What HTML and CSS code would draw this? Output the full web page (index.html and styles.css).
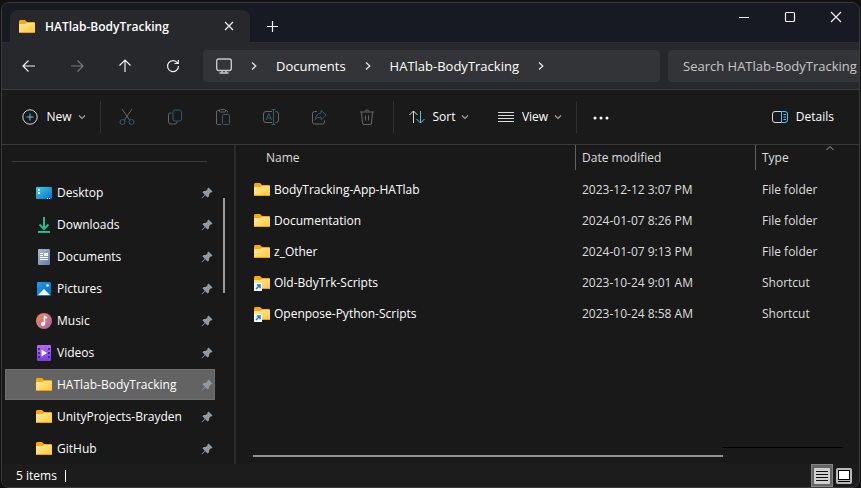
FILE: index.html
```html
<!DOCTYPE html>
<html lang="en">
<head>
<meta charset="utf-8">
<meta name="viewport" content="width=device-width, initial-scale=1">
<title>HATlab-BodyTracking</title>
<link rel="stylesheet" href="styles.css">
</head>
<body>
<svg class="defs" aria-hidden="true">
  <defs>
    <linearGradient id="gFolder" x1="0" y1="0" x2="1" y2="1"><stop offset="0" stop-color="#ffe9a0"/><stop offset="1" stop-color="#ffc937"/></linearGradient>
    <linearGradient id="gDesk" x1="0" y1="0" x2="1" y2="1"><stop offset="0" stop-color="#36d3e8"/><stop offset="1" stop-color="#0f6cc4"/></linearGradient>
    <linearGradient id="gDown" x1="0" y1="0" x2="0" y2="1"><stop offset="0" stop-color="#2fcf8a"/><stop offset="1" stop-color="#1ba58c"/></linearGradient>
    <linearGradient id="gDoc" x1="0" y1="0" x2="1" y2="1"><stop offset="0" stop-color="#a9bcd0"/><stop offset="1" stop-color="#607d9f"/></linearGradient>
    <linearGradient id="gPic" x1="0" y1="0" x2="1" y2="1"><stop offset="0" stop-color="#1f9cea"/><stop offset="1" stop-color="#0a68bd"/></linearGradient>
    <linearGradient id="gMusic" x1="0" y1="0" x2="1" y2="1"><stop offset="0" stop-color="#f58a50"/><stop offset="1" stop-color="#a65fb0"/></linearGradient>
    <linearGradient id="gVid" x1="0" y1="0" x2="0" y2="1"><stop offset="0" stop-color="#b36bf0"/><stop offset="1" stop-color="#7a3fe0"/></linearGradient>
    <symbol id="folder" viewBox="0 0 16 16">
      <path d="M0 2.500Q0 1 1.300 1H6L8 3H15Q16 3 16 4V8H0z" fill="#f5ab0c"/>
      <path d="M0 5.500Q0 5 .8 5H6L8 4H15Q16 4 16 5V13Q16 14 15 14H1Q0 14 0 13z" fill="url(#gFolder)"/>
      <path d="M.3 13.500H15.700" stroke="#e8a50e"/>
    </symbol>
    <symbol id="shortcut" viewBox="0 0 16 16">
      <use href="#folder"/>
      <rect y="8" width="8" height="8" fill="#f4f7fa"/>
      <path d="M2 14L5.500 10.500M2.800 10H6V13.200" fill="none" stroke="#1680d0" stroke-width="1.500"/>
    </symbol>
    <symbol id="pin" viewBox="0 0 12 12">
      <path d="M7.500 .5L11.500 4.500L10.500 5.500L9.500 5.500L8 7.500V9.500L6.500 10.500L4.300 8.200L1 11.500L.5 11L3.800 7.700L1.500 5.500L2.500 4H4.500L6.500 2.500V1.500z" fill="#8f9ba4"/>
    </symbol>
    <symbol id="chev" viewBox="0 0 8 8"><path d="M1 2.500L4 5.500L7 2.500" fill="none" stroke="#a0a0a0" stroke-width="1.200"/></symbol>
    <symbol id="crumb" viewBox="0 0 8 8"><path d="M2 .5L5.800 4L2 7.500" fill="none" stroke="#e4e4e4" stroke-width="1.300"/></symbol>
  </defs>
</svg>
<div class="window">
  <header class="titlebar">
    <div class="tab">
      <svg class="icon"><use href="#folder"/></svg>
      <span class="tab-title">HATlab-BodyTracking</span>
      <button class="tab-close" aria-label="Close tab"><svg class="glyph" viewBox="0 0 16 16"><path d="M4 3L12 11M12 3L4 11"/></svg></button>
    </div>
    <button class="new-tab" aria-label="New tab"><svg class="glyph" viewBox="0 0 16 16"><path d="M8.500 3V14M3 8.500H14"/></svg></button>
    <div class="captions">
      <button aria-label="Minimize"><svg class="glyph" viewBox="0 0 16 16"><path d="M3 8.500H13"/></svg></button>
      <button aria-label="Maximize"><svg class="glyph" viewBox="0 0 16 16"><rect x="3.500" y="3.500" width="9" height="9" rx="1"/></svg></button>
      <button aria-label="Close"><svg class="glyph" viewBox="0 0 16 16"><path d="M3 3L13 13M13 3L3 13"/></svg></button>
    </div>
  </header>

  <div class="navbar">
    <div class="nav-buttons">
      <button aria-label="Back"><svg class="glyph" viewBox="0 0 16 16"><path d="M14 8H2.500M7.500 2.500L2 8L7.500 13.500"/></svg></button>
      <button class="dim" aria-label="Forward"><svg class="glyph" viewBox="0 0 16 16"><path d="M2 8H13.500M8.500 2.500L14 8L8.500 13.500"/></svg></button>
      <button aria-label="Up"><svg class="glyph" viewBox="0 0 16 16"><path d="M8 14V2.500M2.500 7.500L8 2L13.500 7.500"/></svg></button>
      <button aria-label="Refresh"><svg class="glyph" viewBox="0 0 16 16"><path d="M13.500 8A5.500 5.500 0 1 1 12.500 5M13.300 2V5.500H9.500"/></svg></button>
    </div>
    <nav class="address" aria-label="Address">
      <svg class="monitor" viewBox="0 0 16 16"><rect x=".7" y="1" width="14.600" height="11.500" rx="2"/><path d="M6 13V15M10 13V15M3.500 15H12.500"/></svg>
      <svg class="crumb"><use href="#crumb"/></svg>
      <a href="#documents">Documents</a>
      <svg class="crumb"><use href="#crumb"/></svg>
      <a href="#body">HATlab-BodyTracking</a>
      <svg class="crumb"><use href="#crumb"/></svg>
    </nav>
    <input class="search" type="text" aria-label="Search" placeholder="Search HATlab-BodyTracking">
  </div>

  <div class="toolbar">
    <button class="command new"><svg class="icon line" viewBox="0 0 16 16"><circle cx="8" cy="8" r="7.200"/><path class="blue" d="M8 4.500V11.500M4.500 8H11.500"/></svg>New<svg class="chev"><use href="#chev"/></svg></button>
    <div class="tools">
      <button aria-label="Cut"><svg class="icon line" viewBox="0 0 16 16"><path d="M3 0L10.500 11M13 0L5.500 11"/><g class="blue"><circle cx="3.500" cy="13" r="2.500"/><circle cx="12.500" cy="13" r="2.500"/></g></svg></button>
      <button aria-label="Copy"><svg class="icon line" viewBox="0 0 16 16"><path d="M4.500 4H3Q1.500 4 1.500 6V13Q1.500 15 3.500 15H8Q10 15 10 12.500"/><rect class="blue" x="6" y="1" width="8.500" height="11" rx="2"/></svg></button>
      <button aria-label="Paste"><svg class="icon line" viewBox="0 0 16 16"><path d="M6 15.500H2.500Q1.500 15.500 1.500 14V3Q1.500 1.500 3 1.500H5M10 1.500H11.500Q12.500 1.500 12.500 3.500"/><rect x="4.500" y=".5" width="6" height="2.500" rx="1"/><rect class="blue" x="7.500" y="5.500" width="7" height="10" rx="1"/></svg></button>
      <button aria-label="Rename"><svg class="icon line" viewBox="0 0 16 16"><path d="M9 2.500H3Q.5 2.500 .5 5V11Q.5 13.500 3 13.500H9M12.500 2.500H13Q15.500 2.500 15.500 5V11Q15.500 13.500 13 13.500H12.500"/><path class="blue" d="M3 11L5.800 4.500L8.600 11M4 9H7.600M10.500 .5V15.500M8.500 .5H12.500M8.500 15.500H12.500"/></svg></button>
      <button aria-label="Share"><svg class="icon line" viewBox="0 0 16 16"><path d="M6 2.500H3.500Q1.500 2.500 1.500 4.500V13Q1.500 15 3.500 15H11.500Q13.500 15 13.500 13V11.500"/><path class="blue" d="M10 1.500L15.200 6L10 10.500V8Q6 8 4.200 10.500Q5 4.500 10 4.200z"/></svg></button>
      <button aria-label="Delete"><svg class="icon line" viewBox="0 0 16 16"><path d="M1 3H15M6 2.500Q6 1 8 1Q10 1 10 2.500M2.500 3L3.500 14Q3.600 15.500 5 15.500H11Q12.400 15.500 12.500 14L13.500 3M6.500 6.500V11.500M9.500 6.500V11.500"/></svg></button>
    </div>
    <button class="command sort"><svg class="icon line" viewBox="0 0 16 16"><path d="M4.500 14V2M.5 6L4.500 2L8.500 6"/><path class="blue" d="M11.500 2V14M7.500 10L11.500 14L15.500 10"/></svg>Sort<svg class="chev"><use href="#chev"/></svg></button>
    <button class="command view"><svg class="icon line" viewBox="0 0 16 16"><path d="M0 3.500H16M0 6.500H16M0 9.500H16M0 12.500H16"/></svg>View<svg class="chev"><use href="#chev"/></svg></button>
    <button class="more" aria-label="See more"><svg class="icon" viewBox="0 0 16 16" fill="#fff"><circle cx="2" cy="9" r="1.500"/><circle cx="8" cy="9" r="1.500"/><circle cx="14" cy="9" r="1.500"/></svg></button>
    <button class="command details"><svg class="icon line" viewBox="0 0 16 16"><path d="M9.500 2.500H3Q.5 2.500 .5 5V11Q.5 13.500 3 13.500H9.500"/><path class="blue" d="M9.500 2.500H13Q15.500 2.500 15.500 5V11Q15.500 13.500 13 13.500H9.500zM11.500 5.500H14M11.500 8H14M11.500 10.500H14"/></svg>Details</button>
  </div>

  <div class="content">
    <aside class="sidebar">
      <ul class="places">
        <li><a href="#desktop"><svg class="icon" viewBox="0 0 16 16"><rect y="2" width="16" height="12" rx="1" fill="url(#gDesk)"/><path d="M2 4H4V6H2zM2 7H4V9H2z" fill="#fff"/><path d="M11 13.500H12M13 13.500H14" stroke="#d8f0ff"/></svg><span>Desktop</span><svg class="pin"><use href="#pin"/></svg></a></li>
        <li><a href="#downloads"><svg class="icon" viewBox="0 0 16 16"><path d="M8 0V12M3.500 7.500L8 12L12.500 7.500" fill="none" stroke="#22bd88" stroke-width="2"/><rect x="2" y="14" width="12" height="2" fill="url(#gDown)"/></svg><span>Downloads</span><svg class="pin"><use href="#pin"/></svg></a></li>
        <li><a href="#docs"><svg class="icon" viewBox="0 0 16 16"><rect x="2" width="12" height="16" rx="1" fill="url(#gDoc)"/><path d="M4 4.500H7M4 6.500H7M4 8.500H12M4 10.500H12" stroke="#fff"/><rect x="8" y="4" width="4" height="3" fill="#fff"/></svg><span>Documents</span><svg class="pin"><use href="#pin"/></svg></a></li>
        <li><a href="#pictures"><svg class="icon" viewBox="0 0 16 16"><rect x="1" y="1" width="14" height="14" rx="1" fill="url(#gPic)"/><path d="M2 14L8 8L14 14z" fill="#fff"/><circle cx="11.500" cy="4.500" r="1.300" fill="#fff"/></svg><span>Pictures</span><svg class="pin"><use href="#pin"/></svg></a></li>
        <li><a href="#music"><svg class="icon" viewBox="0 0 16 16"><circle cx="8" cy="8" r="8" fill="url(#gMusic)"/><ellipse cx="7" cy="11" rx="2.200" ry="2" fill="#fff"/><path d="M8.500 11V3.500L11 5" fill="none" stroke="#fff" stroke-width="1.500"/></svg><span>Music</span><svg class="pin"><use href="#pin"/></svg></a></li>
        <li><a href="#videos"><svg class="icon" viewBox="0 0 16 16"><rect x="1" width="14" height="16" rx="1" fill="url(#gVid)"/><path d="M5.500 4.500V11.500L11 8z" fill="#fff"/><path d="M3 3V15M13 3V15" stroke="#4a2596" stroke-width="2" stroke-dasharray="2 2"/></svg><span>Videos</span><svg class="pin"><use href="#pin"/></svg></a></li>
        <li><a class="selected" href="#body"><svg class="icon"><use href="#folder"/></svg><span>HATlab-BodyTracking</span><svg class="pin"><use href="#pin"/></svg></a></li>
        <li><a href="#unity"><svg class="icon"><use href="#folder"/></svg><span>UnityProjects-Brayden</span><svg class="pin"><use href="#pin"/></svg></a></li>
        <li><a href="#github"><svg class="icon"><use href="#folder"/></svg><span>GitHub</span><svg class="pin"><use href="#pin"/></svg></a></li>
      </ul>
      <div class="scroll-track"><div class="scroll-thumb"></div></div>
    </aside>
    <main class="files">
      <table>
        <colgroup><col class="col-name"><col class="col-date"><col></colgroup>
        <thead><tr><th><div>Name</div></th><th><div>Date modified</div></th><th><div>Type</div></th></tr></thead>
        <tbody>
          <tr><td><div class="file"><svg class="icon"><use href="#folder"/></svg>BodyTracking-App-HATlab</div></td><td>2023-12-12 3:07 PM</td><td>File folder</td></tr>
          <tr><td><div class="file"><svg class="icon"><use href="#folder"/></svg>Documentation</div></td><td>2024-01-07 8:26 PM</td><td>File folder</td></tr>
          <tr><td><div class="file"><svg class="icon"><use href="#folder"/></svg>z_Other</div></td><td>2024-01-07 9:13 PM</td><td>File folder</td></tr>
          <tr><td><div class="file"><svg class="icon"><use href="#shortcut"/></svg>Old-BdyTrk-Scripts</div></td><td>2023-10-24 9:01 AM</td><td>Shortcut</td></tr>
          <tr><td><div class="file"><svg class="icon"><use href="#shortcut"/></svg>Openpose-Python-Scripts</div></td><td>2023-10-24 8:58 AM</td><td>Shortcut</td></tr>
        </tbody>
      </table>
      <svg class="sort-mark" viewBox="0 0 8 4"><path d="M.5 4L4 .5L7.500 4" fill="none" stroke="#a8a8a8"/></svg>
      <div class="hscroll"><div class="hthumb"></div><div class="hrest"></div></div>
    </main>
  </div>

  <footer class="status">
    <span class="count">5 items</span>
    <div class="modes">
      <button class="mode active" aria-label="Details view"><svg class="icon" viewBox="0 0 16 16"><rect width="16" height="16" rx="1" fill="#d0d0d0"/><path d="M2 3.500H14M2 6.500H14M2 9.500H14M2 12.500H14" stroke="#111"/></svg></button>
      <button class="mode" aria-label="Large icons view"><svg class="icon" viewBox="0 0 16 16"><rect width="16" height="16" rx="2" fill="#b8bcbc"/><rect x="2.500" y="2.500" width="11" height="9" fill="#fff" stroke="#000"/><path d="M2 13.500H14" stroke="#000"/></svg></button>
    </div>
  </footer>
</div>
</body>
</html>
```
FILE: styles.css
```css
* { box-sizing: border-box; }

body {
  margin: 0;
  padding: 2px 1px 0;
  background: #111113;
  color: #fff;
  font: 12px/16px "Open Sans", "Noto Sans", sans-serif;
}

button {
  display: flex;
  align-items: center;
  justify-content: center;
  padding: 0;
  border: 0;
  background: none;
  color: inherit;
  font: inherit;
}

a { color: inherit; text-decoration: none; }
svg { display: block; flex: none; }
.defs { position: absolute; width: 0; height: 0; }
.icon, .glyph { width: 16px; height: 16px; }
.glyph { fill: none; stroke: #f0f0f0; stroke-width: 1.2; }

.window {
  display: flex;
  flex-direction: column;
  min-height: calc(100vh - 2px);
  overflow: hidden;
  border: 1px solid #3b3b3b;
  border-radius: 8px;
  background: #191919;
}

.titlebar {
  display: flex;
  align-items: flex-start;
  height: 40px;
  padding-left: 8px;
  border-bottom: 1px solid #2c2d30;
  background: #171a23;
}

.tab {
  display: flex;
  align-items: center;
  width: 240px;
  height: 33px;
  margin-top: 7px;
  padding: 0 13px 0 9px;
  border-radius: 8px 8px 0 0;
  background: #27282c;
}

.tab-title { flex: 1; margin-left: 10px; font-weight: 600; }
.new-tab { width: 44px; height: 46px; }
.captions { display: flex; margin-left: auto; }
.captions button { width: 46px; height: 28px; }

.navbar {
  display: flex;
  align-items: center;
  height: 47px;
  padding-left: 3px;
  border-bottom: 1px solid #3b3c3e;
  background: #27282c;
  font-size: 13px;
}

.nav-buttons { display: flex; margin-right: 6px; }
.nav-buttons button { width: 48px; height: 32px; }
.dim { opacity: .4; }

.address {
  display: flex;
  flex: 1;
  align-items: center;
  gap: 18px;
  height: 32px;
  padding: 0 13px;
  border-radius: 4px;
  background: #333437;
}

.monitor { width: 16px; height: 16px; fill: none; stroke: #c6c6c6; stroke-width: 1.4; }
.crumb { width: 8px; height: 8px; }

.search {
  flex: 0 1 191px;
  min-width: 0;
  height: 32px;
  margin-left: 8px;
  padding: 0 0 0 15px;
  border: 0;
  border-radius: 4px 0 0 4px;
  background: #333437;
  color: #c8c8c8;
  font: inherit;
}

.search::placeholder { color: #c8c8c8; opacity: 1; }

.toolbar {
  display: flex;
  align-items: center;
  height: 55px;
  padding-left: 1px;
  border-bottom: 1px solid #3a3a3a;
  background: #1a1a1a;
}

.command { gap: 8px; height: 32px; }
.chev { width: 8px; height: 8px; margin-left: -2px; }
.line { fill: none; stroke: #d8d8d8; stroke-width: 1; }
.blue { stroke: #55bff8; }
.new { width: 97px; padding-left: 5px; }

.tools {
  display: flex;
  padding: 0 2px;
  border-right: 1px solid #303030;
  border-left: 1px solid #303030;
}

.tools button { width: 48px; height: 32px; }
.tools svg { opacity: .4; }
.sort { width: 90px; }
.view { width: 92px; }
.more { width: 49px; height: 32px; border-left: 1px solid #303030; }
.details { margin-right: 25px; margin-left: auto; }

.content { display: flex; flex: 1; background: #191919; }

.sidebar {
  display: flex;
  justify-content: space-between;
  width: 234px;
  padding: 16px 8px 0 3px;
  border-right: 2px solid #292929;
}

.places { width: 210px; margin: 0; padding: 0; list-style: none; }
.places::before {
  display: block;
  height: 1px;
  margin: 0 8px 15px 7px;
  background: #3b3b3b;
  content: "";
}

.places a {
  display: flex;
  align-items: center;
  height: 31px;
  padding: 0 2px 0 31px;
}

.places li + li { margin-top: 1px; }
.places span { flex: 1; margin-left: 5px; white-space: nowrap; }
.places .selected { background: #636363; outline: 1px solid #707070; outline-offset: -1px; }
.pin { width: 12px; height: 12px; }
.scroll-track { width: 3px; padding-top: 37px; }
.scroll-thumb { width: 2px; height: 95px; background: #9a9a9a; }

.files {
  position: relative;
  display: flex;
  flex: 1;
  flex-direction: column;
  min-width: 0;
}

table { width: 100%; border-collapse: collapse; table-layout: fixed; }
.col-name { width: 339px; }
.col-date { width: 180px; }
th { height: 29px; padding: 0; font-weight: 400; text-align: left; vertical-align: top; color: #dedede; }
th div { height: 25px; padding-left: 6px; border-left: 1px solid #636363; line-height: 25px; }
th:first-child div { padding-left: 30px; border-left: 0; }
td { height: 31px; padding: 0 0 0 7px; color: #dedede; white-space: nowrap; }
td:first-child { padding-left: 18px; color: #fff; }
.file { display: flex; align-items: center; gap: 4px; }
.sort-mark { position: absolute; top: 1px; right: 25px; width: 8px; height: 4px; }

.hscroll { display: flex; height: 17px; margin-top: auto; padding: 0 16px 0 17px; }
.hthumb { flex: 470 1 0; height: 2px; margin-top: 8px; background: #969696; }
.hrest { flex: 120 1 0; height: 1px; background: #000; }

.status {
  display: flex;
  align-items: center;
  height: 23px;
  padding: 0 4px 0 14px;
  background: #1c1c1c;
}

.count { padding-right: 8px; border-right: 1px solid #fff; line-height: 12px; }
.modes { display: flex; margin-left: auto; }
.mode { width: 22px; height: 23px; border: 1px solid transparent; }
.mode.active { border-color: #858585; background: #666; }
```
